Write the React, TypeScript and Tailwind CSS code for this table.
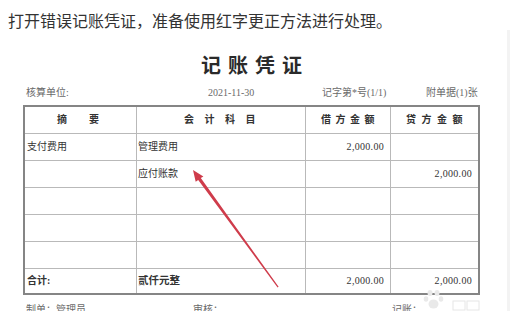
import React from "react";

const F = "font-['Liberation_Serif','Noto_Sans_CJK_SC',serif]";

type Row = { a: string; b: string; c: string; d: string; total?: boolean };

const rows: Row[] = [
  { a: "支付费用", b: "管理费用", c: "2,000.00", d: "" },
  { a: "", b: "应付账款", c: "", d: "2,000.00" },
  { a: "", b: "", c: "", d: "" },
  { a: "", b: "", c: "", d: "" },
  { a: "", b: "", c: "", d: "" },
  { a: "合计:", b: "贰仟元整", c: "2,000.00", d: "2,000.00", total: true },
];

function Cell({
  children,
  last,
  lastRow,
  className = "",
}: {
  children?: React.ReactNode;
  last?: boolean;
  lastRow?: boolean;
  className?: string;
}) {
  return (
    <div
      className={`${lastRow ? "h-[24px]" : "h-[27px] border-b"} ${
        last ? "" : "border-r"
      } border-[#b9b9b9] flex items-center ${className}`}
    >
      {children}
    </div>
  );
}

export default function App() {
  return (
    <div className="relative w-[528px] h-[311px] overflow-hidden bg-white">
      <p className="pl-[8px] pt-[10px] text-[16px] leading-[20px] text-[#333] font-['Noto_Sans_CJK_SC',sans-serif] whitespace-nowrap">
        打开错误记账凭证，准备使用红字更正方法进行处理。
      </p>

      <div className="flex flex-col pt-[24px] w-[510px] h-[290px] border-r-[3px] border-[#f3f3f3]">
        <div
          className={`ml-[23px] w-[457px] text-center pl-[7px] text-[20px] leading-[24px] font-bold tracking-[7px] text-[#2a2a2a] ${F}`}
        >
          记账凭证
        </div>

        <div
          className={`ml-[26px] mt-[9px] flex text-[10px] leading-[12px] text-[#6a6a6a] whitespace-nowrap ${F}`}
        >
          <span className="w-[182px]">核算单位:</span>
          <span className="w-[114px]">2021-11-30</span>
          <span className="w-[104px]">记字第*号(1/1)</span>
          <span>附单据(1)张</span>
        </div>

        <div
          className={`ml-[23px] mt-[6px] w-[457px] border-2 border-[#858585] grid grid-cols-[112px_169px_85px_87px] text-[10px] leading-[12px] text-[#333] ${F}`}
        >
          <Cell className="pl-[32px] font-bold gap-[22px]">
            <span>摘</span>
            <span>要</span>
          </Cell>
          <Cell className="justify-center font-bold pl-[8px] tracking-[10.5px]">
            会计科目
          </Cell>
          <Cell className="justify-center font-bold pl-[4px] tracking-[4.5px]">
            借方金额
          </Cell>
          <Cell last className="justify-center font-bold pl-[5px] tracking-[5.5px]">
            贷方金额
          </Cell>

          {rows.map((r, i) => (
            <React.Fragment key={i}>
              <Cell lastRow={r.total} className={`pl-[2px] ${r.total ? "font-bold" : ""}`}>
                {r.a}
              </Cell>
              <Cell lastRow={r.total} className={`pl-[1px] ${r.total ? "font-bold text-[10.5px]" : ""}`}>
                {r.b}
              </Cell>
              <Cell lastRow={r.total} className="justify-end pr-[6px] tracking-[0.3px]">
                {r.c}
              </Cell>
              <Cell lastRow={r.total} last className="justify-end pr-[6px] tracking-[0.3px]">
                {r.d}
              </Cell>
            </React.Fragment>
          ))}
        </div>

        <div
          className={`ml-[26px] mt-[9px] flex text-[10px] leading-[12px] text-[#6a6a6a] whitespace-nowrap ${F}`}
        >
          <span className="w-[167px]">制单：管理员</span>
          <span className="w-[199px]">审核：</span>
          <span>记账：</span>
        </div>
      </div>

      {/* red arrow annotation */}
      <svg
        className="absolute left-0 top-0 pointer-events-none"
        width="528"
        height="311"
        viewBox="0 0 528 311"
      >
        <polygon
          points="193,170 203.4,176.4 200.8,178.1 278.6,286.8 277.6,287.4 198.2,179.9 195.7,181.7"
          fill="#cf3c4b"
        />
      </svg>

      {/* faint watermark */}
      <svg
        className="absolute left-[420px] top-[288px] pointer-events-none"
        width="64"
        height="23"
        viewBox="0 0 64 23"
      >
        <g fill="#e9e9e9">
          <ellipse cx="10" cy="5" rx="2.5" ry="3" />
          <ellipse cx="17" cy="5" rx="2.5" ry="3" />
          <ellipse cx="6" cy="11" rx="2.3" ry="2.8" />
          <ellipse cx="21" cy="11" rx="2.3" ry="2.8" />
          <ellipse cx="13.5" cy="16" rx="5" ry="4.5" />
        </g>
        <g fill="none" stroke="#e6e6e6" strokeWidth="1">
          <rect x="33" y="13" width="12" height="9" />
          <rect x="47" y="13" width="12" height="9" />
        </g>
      </svg>
    </div>
  );
}
